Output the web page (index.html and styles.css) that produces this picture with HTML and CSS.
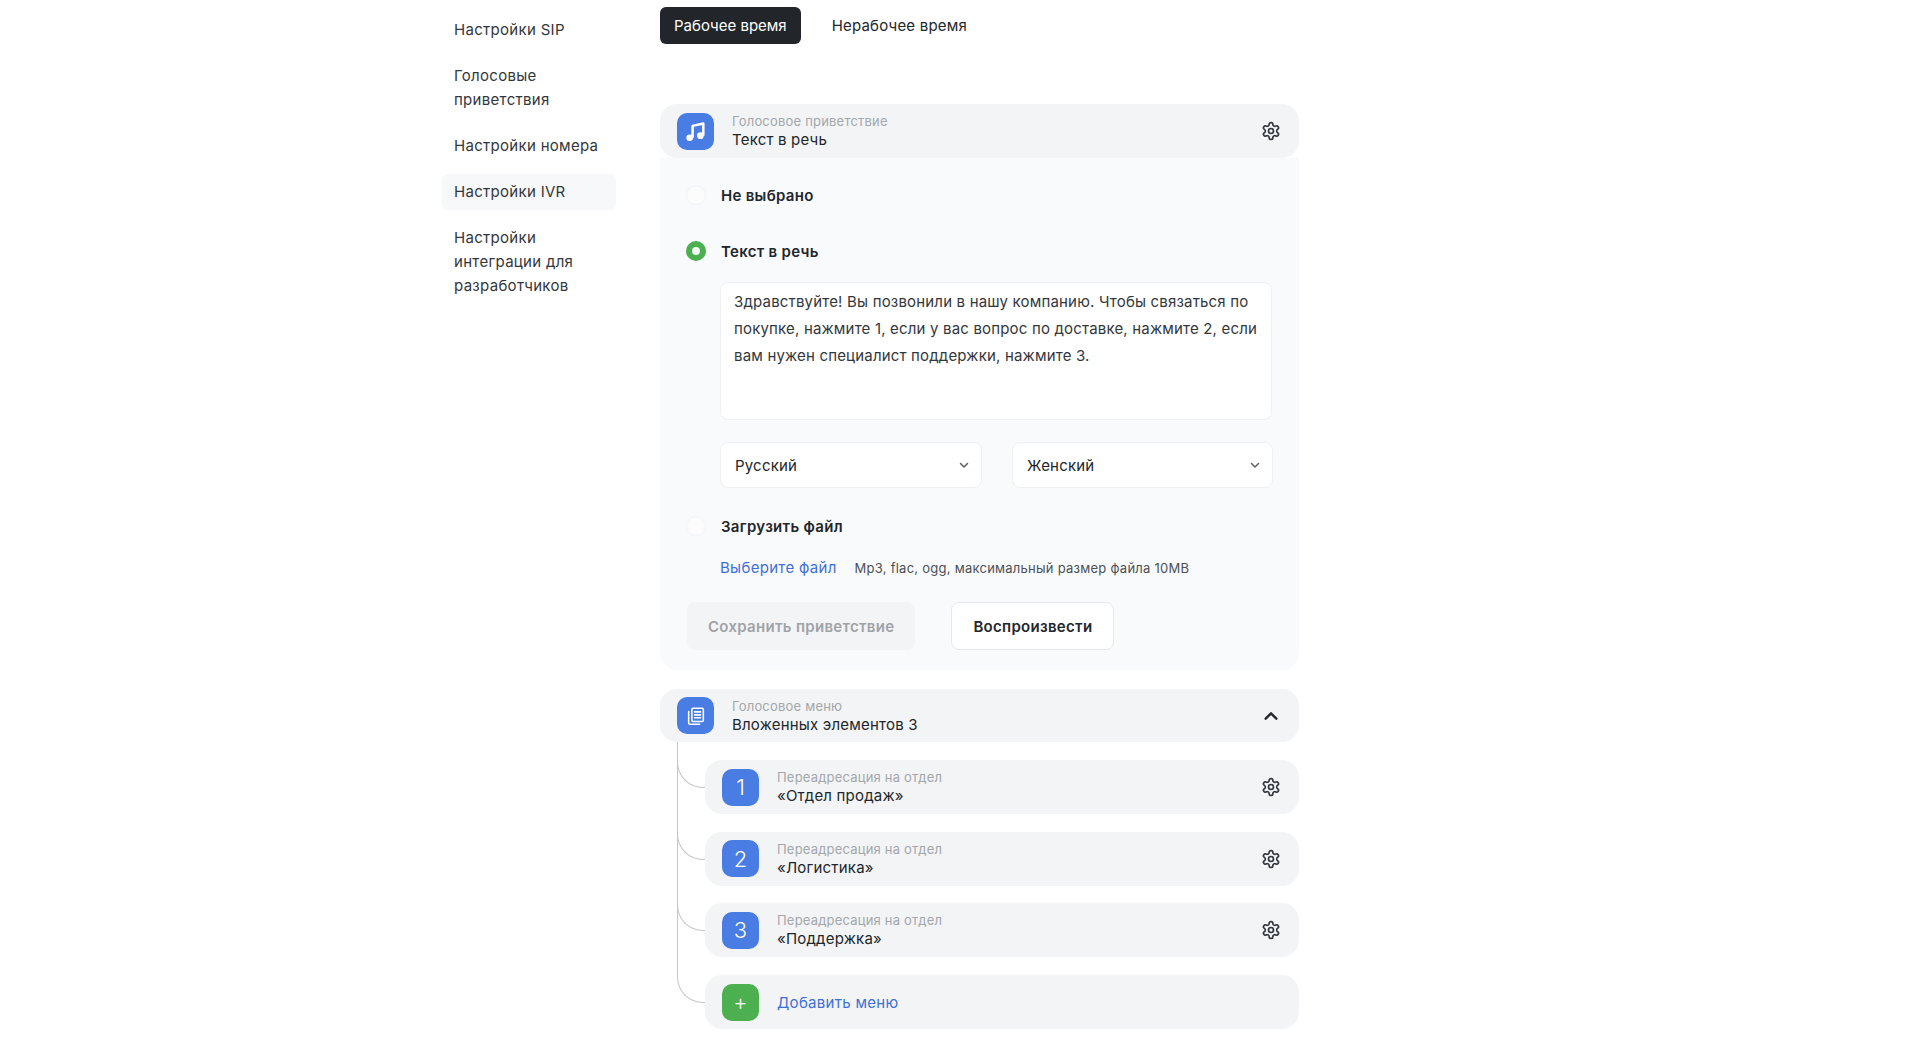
FILE: index.html
```html
<!DOCTYPE html>
<html lang="ru">
<head>
    <meta charset="UTF-8">
    <meta name="viewport" content="width=device-width, initial-scale=1.0">
    <title>Настройки IVR</title>
    <link rel="stylesheet" href="styles.css">
</head>
<body>
    <svg class="sprite" xmlns="http://www.w3.org/2000/svg">
        <symbol id="gear" viewBox="0 0 24 24">
            <path d="M12.22 2h-.44a2 2 0 0 0-2 2v.18a2 2 0 0 1-1 1.73l-.43.25a2 2 0 0 1-2 0l-.15-.08a2 2 0 0 0-2.73.73l-.22.38a2 2 0 0 0 .73 2.73l.15.1a2 2 0 0 1 1 1.72v.51a2 2 0 0 1-1 1.74l-.15.09a2 2 0 0 0-.73 2.73l.22.38a2 2 0 0 0 2.73.73l.15-.08a2 2 0 0 1 2 0l.43.25a2 2 0 0 1 1 1.73V20a2 2 0 0 0 2 2h.44a2 2 0 0 0 2-2v-.18a2 2 0 0 1 1-1.73l.43-.25a2 2 0 0 1 2 0l.15.08a2 2 0 0 0 2.73-.73l.22-.39a2 2 0 0 0-.73-2.73l-.15-.08a2 2 0 0 1-1-1.74v-.5a2 2 0 0 1 1-1.74l.15-.09a2 2 0 0 0 .73-2.73l-.22-.38a2 2 0 0 0-2.73-.73l-.15.08a2 2 0 0 1-2 0l-.43-.25a2 2 0 0 1-1-1.73V4a2 2 0 0 0-2-2z" fill="none" stroke="currentColor" stroke-width="2"/>
            <circle cx="12" cy="12" r="3" fill="none" stroke="currentColor" stroke-width="2"/>
        </symbol>
        <symbol id="chevron" viewBox="0 0 12 12">
            <path d="M2.5 4.5 6 8l3.5-3.5" fill="none" stroke="currentColor" stroke-width="1.5" stroke-linecap="round" stroke-linejoin="round"/>
        </symbol>
    </svg>

    <div class="page">
        <nav class="sidebar">
            <a class="nav-item">Настройки SIP</a>
            <a class="nav-item">Голосовые приветствия</a>
            <a class="nav-item">Настройки номера</a>
            <a class="nav-item active">Настройки IVR</a>
            <a class="nav-item">Настройки интеграции для разработчиков</a>
        </nav>

        <main class="content">
            <div class="tabs">
                <button class="tab active" type="button">Рабочее время</button>
                <button class="tab" type="button">Нерабочее время</button>
            </div>

            <section class="block">
                <div class="row">
                    <div class="row-icon blue">
                        <svg class="glyph" viewBox="0 0 24 24">
                            <path d="M9.2 18V6.6l10.3-2.3V16" fill="none" stroke="#fff" stroke-width="2.4" stroke-linejoin="round"/>
                            <circle cx="6.4" cy="18" r="3.2" fill="#fff"/>
                            <circle cx="16.7" cy="16" r="3.2" fill="#fff"/>
                        </svg>
                    </div>
                    <div class="row-text">
                        <div class="row-label">Голосовое приветствие</div>
                        <div class="row-title">Текст в речь</div>
                    </div>
                    <svg class="gear"><use href="#gear"/></svg>
                </div>

                <div class="panel">
                    <div class="option option-first">
                        <span class="radio"></span>
                        <span class="option-label">Не выбрано</span>
                    </div>
                    <div class="option">
                        <span class="radio checked"></span>
                        <span class="option-label">Текст в речь</span>
                    </div>
                    <div class="option-body">
                        <textarea class="speech-text" readonly>Здравствуйте! Вы позвонили в нашу компанию. Чтобы связаться по покупке, нажмите 1, если у вас вопрос по доставке, нажмите 2, если вам нужен специалист поддержки, нажмите 3.</textarea>
                        <div class="selects">
                            <div class="select">Русский<svg class="chevron"><use href="#chevron"/></svg></div>
                            <div class="select">Женский<svg class="chevron"><use href="#chevron"/></svg></div>
                        </div>
                    </div>
                    <div class="option option-upload">
                        <span class="radio"></span>
                        <span class="option-label">Загрузить файл</span>
                    </div>
                    <div class="file-line">
                        <a class="link">Выберите файл</a>
                        <span class="file-hint">Mp3, flac, ogg, максимальный размер файла 10MB</span>
                    </div>
                    <div class="actions">
                        <button class="btn btn-disabled" type="button">Сохранить приветствие</button>
                        <button class="btn btn-outline" type="button">Воспроизвести</button>
                    </div>
                </div>
            </section>

            <section class="block">
                <div class="row row-menu">
                    <div class="row-icon blue">
                        <svg class="glyph glyph-small" viewBox="0 0 24 24" fill="none" stroke="#fff" stroke-width="1.7" stroke-linejoin="round" stroke-linecap="round">
                            <rect x="7.5" y="3.5" width="12.5" height="14.5" rx="1.5"/>
                            <path d="M4 7v12.5A1.5 1.5 0 0 0 5.5 21H16"/>
                            <path d="M10.5 7.5h6.5M10.5 10.8h6.5M10.5 14h6.5"/>
                        </svg>
                    </div>
                    <div class="row-text">
                        <div class="row-label">Голосовое меню</div>
                        <div class="row-title">Вложенных элементов 3</div>
                    </div>
                    <svg class="collapse" viewBox="0 0 12 12"><path d="M2 8l4-4 4 4" fill="none" stroke="#22262b" stroke-width="1.8" stroke-linecap="round" stroke-linejoin="round"/></svg>
                </div>

                <div class="tree">
                    <div class="tree-item">
                        <div class="row">
                            <div class="row-icon blue">1</div>
                            <div class="row-text">
                                <div class="row-label">Переадресация на отдел</div>
                                <div class="row-title">«Отдел продаж»</div>
                            </div>
                            <svg class="gear"><use href="#gear"/></svg>
                        </div>
                    </div>
                    <div class="tree-item">
                        <div class="row">
                            <div class="row-icon blue">2</div>
                            <div class="row-text">
                                <div class="row-label">Переадресация на отдел</div>
                                <div class="row-title">«Логистика»</div>
                            </div>
                            <svg class="gear"><use href="#gear"/></svg>
                        </div>
                    </div>
                    <div class="tree-item">
                        <div class="row">
                            <div class="row-icon blue">3</div>
                            <div class="row-text">
                                <div class="row-label">Переадресация на отдел</div>
                                <div class="row-title">«Поддержка»</div>
                            </div>
                            <svg class="gear"><use href="#gear"/></svg>
                        </div>
                    </div>
                    <div class="tree-item">
                        <div class="row">
                            <div class="row-icon green">+</div>
                            <div class="row-text">
                                <a class="link link-add">Добавить меню</a>
                            </div>
                        </div>
                    </div>
                </div>
            </section>
        </main>
    </div>
</body>
</html>
```

FILE: styles.css
```css
html, body {
    margin: 0;
    height: 100%;
    overflow: hidden;
}
body {
    font-family: 'Inter', 'Noto Sans', sans-serif;
    font-size: 15px;
    color: #22262b;
    background-color: #ffffff;
}
.sprite {
    display: none;
}
.page {
    display: flex;
    padding-left: 442px;
}
.sidebar {
    width: 174px;
    flex-shrink: 0;
    padding-top: 12px;
    margin-right: 44px;
    display: flex;
    flex-direction: column;
    gap: 10px;
}
.nav-item {
    padding: 6px 12px;
    line-height: 24px;
    letter-spacing: 0.3px;
    color: #33373c;
    border-radius: 6px;
}
.nav-item.active {
    background-color: #f7f8fa;
}
.content {
    width: 639px;
    padding-top: 7px;
}
.tabs {
    display: flex;
    gap: 17px;
    margin-bottom: 60px;
}
.tab {
    height: 37px;
    padding: 0 14px;
    border: none;
    border-radius: 6px;
    background: none;
    color: #22262b;
    font-family: inherit;
    font-size: 15px;
    letter-spacing: 0.2px;
}
.tab.active {
    background-color: #22262b;
    color: #ffffff;
    letter-spacing: 0;
}
.block {
    margin-bottom: 19px;
}
.row {
    display: flex;
    align-items: center;
    height: 54px;
    padding: 0 18px 0 17px;
    background-color: #f2f4f6;
    border-radius: 17px;
}
.row-menu {
    height: 53px;
}
.row-icon {
    width: 37px;
    height: 37px;
    flex-shrink: 0;
    border-radius: 10px;
    display: flex;
    align-items: center;
    justify-content: center;
    color: #ffffff;
    font-size: 22px;
    font-weight: 300;
}
.blue {
    background-color: #4a7de3;
}
.green {
    background-color: #4caf50;
}
.glyph {
    width: 25px;
    height: 25px;
}
.glyph-small {
    width: 22px;
    height: 22px;
}
.row-text {
    flex: 1;
    margin-left: 18px;
}
.row-label {
    font-size: 13px;
    line-height: 17px;
    letter-spacing: 0.2px;
    color: #a3a7ab;
}
.row-title {
    font-size: 15px;
    line-height: 19px;
    letter-spacing: 0.2px;
    color: #22262b;
}
.gear {
    width: 20px;
    height: 20px;
    color: #33373c;
    flex-shrink: 0;
}
.collapse {
    width: 16px;
    height: 16px;
    margin-right: 2px;
    flex-shrink: 0;
}
.panel {
    background-color: #f9fafc;
    border-radius: 0 0 17px 17px;
    padding: 0 27px 20px 26px;
}
.option {
    display: flex;
    align-items: center;
    height: 20px;
    margin-top: 36px;
}
.option-first {
    margin-top: 0;
    padding-top: 27px;
    height: 20px;
    box-sizing: content-box;
}
.option-upload {
    margin-top: 28px;
}
.radio {
    width: 20px;
    height: 20px;
    box-sizing: border-box;
    border-radius: 50%;
    background-color: #fcfcfd;
    border: 1px solid #f2f3f5;
    flex-shrink: 0;
}
.radio.checked {
    background-color: #f2f8f2;
    border: 6px solid #4caf50;
}
.option-label {
    margin-left: 15px;
    font-weight: 600;
    font-size: 15px;
    letter-spacing: 0.3px;
}
.option-body {
    margin-left: 34px;
    margin-top: 21px;
}
.speech-text {
    display: block;
    width: 100%;
    height: 138px;
    box-sizing: border-box;
    padding: 5px 13px;
    border: 1px solid #eef0f2;
    border-radius: 8px;
    background-color: #ffffff;
    color: #33373c;
    font-family: inherit;
    font-size: 15px;
    line-height: 27px;
    letter-spacing: 0.18px;
    resize: none;
    outline: none;
}
.selects {
    display: grid;
    grid-template-columns: 262px 261px;
    gap: 30px;
    margin-top: 22px;
}
.select {
    display: flex;
    align-items: center;
    justify-content: space-between;
    height: 46px;
    box-sizing: border-box;
    padding: 0 11px 0 14px;
    background-color: #ffffff;
    border: 1px solid #eef0f2;
    border-radius: 8px;
    color: #22262b;
    letter-spacing: 0.2px;
}
.chevron {
    width: 12px;
    height: 12px;
    color: #5a5f64;
}
.file-line {
    display: flex;
    align-items: center;
    margin: 22px 0 0 34px;
    line-height: 20px;
}
.link {
    color: #3f6fd8;
    letter-spacing: 0.3px;
}
.file-hint {
    margin-left: 18px;
    font-size: 13px;
    letter-spacing: 0.25px;
    color: #4c5055;
}
.actions {
    display: flex;
    gap: 36px;
    margin: 24px 0 0 1px;
}
.btn {
    height: 48px;
    padding: 0 21px;
    border-radius: 8px;
    font-family: inherit;
    font-size: 15px;
    font-weight: 600;
    letter-spacing: 0.3px;
}
.btn-disabled {
    background-color: #f3f4f6;
    border: none;
    color: #a0a3a6;
}
.btn-outline {
    background-color: #ffffff;
    border: 1px solid #e6e8eb;
    color: #22262b;
}
.tree {
    margin: 18px 0 0 45px;
    display: flex;
    flex-direction: column;
    gap: 17.7px;
}
.tree-item {
    position: relative;
}
.tree-item::before {
    content: "";
    position: absolute;
    left: -28px;
    top: -8px;
    width: 28px;
    height: 36px;
    box-sizing: border-box;
    border-left: 1px solid #c4c7ca;
    border-bottom: 1px solid #c4c7ca;
    border-bottom-left-radius: 26px;
}
.tree-item::after {
    content: "";
    position: absolute;
    left: -28px;
    top: -18px;
    bottom: 0;
    border-left: 1px solid #c4c7ca;
}
.tree-item:last-child::after {
    bottom: auto;
    height: 20px;
}
.link-add {
    font-size: 15px;
}
```
